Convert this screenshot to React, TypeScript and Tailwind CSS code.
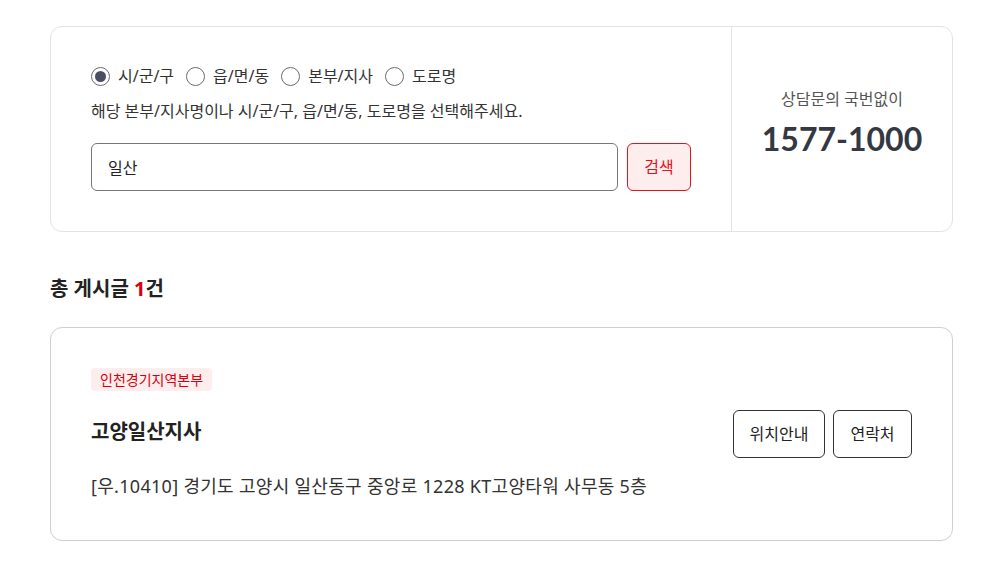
import { useState } from 'react'

const font = { fontFamily: '"Noto Sans", "Noto Sans CJK KR", sans-serif' }

const options = ['시/군/구', '읍/면/동', '본부/지사', '도로명']

export default function App() {
  const [selected, setSelected] = useState(options[0])
  const [keyword, setKeyword] = useState('일산')

  return (
    <div className="min-h-screen bg-white px-[50px] pt-[26px] text-[#222]" style={font}>
      {/* Search box */}
      <div className="flex h-[206px] rounded-[12px] border border-[#e3e3e3]">
        <div className="flex-1 pl-[40px] pr-[40px] pt-[38px]">
          <div className="flex h-[22px] items-center">
            {options.map((opt) => (
              <label
                key={opt}
                className="mr-[12px] flex cursor-pointer items-center"
                onClick={() => setSelected(opt)}
              >
                <span className="flex h-[19px] w-[19px] items-center justify-center rounded-full border border-[#6b6b6b] bg-white">
                  {selected === opt && (
                    <span className="h-[11px] w-[11px] rounded-full bg-[#4b4e60]" />
                  )}
                </span>
                <span className="ml-[8px] text-[16px] leading-[22px] text-[#333]">{opt}</span>
              </label>
            ))}
          </div>
          <p className="mt-[13px] text-[16px] leading-[22px] text-[#333]">
            해당 본부/지사명이나 시/군/구, 읍/면/동, 도로명을 선택해주세요.
          </p>
          <div className="mt-[21px] flex gap-[9px]">
            <input
              value={keyword}
              onChange={(e) => setKeyword(e.target.value)}
              className="h-[48px] flex-1 rounded-[6px] border border-[#777] px-[16px] text-[16px] text-[#222] outline-none"
              style={font}
            />
            <button className="h-[48px] w-[64px] rounded-[6px] border border-[#e1141e] bg-[#fdeded] text-[16px] text-[#e1141e]">
              검색
            </button>
          </div>
        </div>
        <div className="flex w-[221px] flex-col items-center justify-center border-l border-[#e3e3e3] pb-[14px]">
          <p className="text-[16px] leading-[22px] text-[#555]">상담문의 국번없이</p>
          <p
            className="mt-[11px] text-[32px] font-bold leading-[36px] text-[#333842]"
            style={{ fontFamily: 'Lato, "Noto Sans", sans-serif' }}
          >
            1577-1000
          </p>
        </div>
      </div>

      {/* Result count */}
      <h2 className="mt-[43px] text-[20px] font-bold leading-[28px] text-[#222]">
        총 게시글 <span className="text-[#d7000f]">1</span>건
      </h2>

      {/* Result list */}
      <div className="mt-[24px] flex items-start rounded-[12px] border border-[#cfcfcf] px-[40px] pb-[41px] pt-[40px]">
        <div className="flex-1">
          <div className="flex">
            <span className="rounded-[4px] bg-[#fdeded] px-[9px] text-[14px] leading-[23px] text-[#d7000f]">
              인천경기지역본부
            </span>
          </div>
          <h3 className="mt-[27px] text-[20px] font-bold leading-[28px] text-[#222]">고양일산지사</h3>
          <p className="mt-[27px] text-[18px] leading-[26px] tracking-[0.3px] text-[#333]">
            [우.10410] 경기도 고양시 일산동구 중앙로 1228 KT고양타워 사무동 5층
          </p>
        </div>
        <div className="mt-[42px] flex gap-[8px]">
          <button className="h-[48px] w-[92px] rounded-[6px] border border-[#333] bg-white text-[16px] text-[#222]">
            위치안내
          </button>
          <button className="h-[48px] w-[79px] rounded-[6px] border border-[#333] bg-white text-[16px] text-[#222]">
            연락처
          </button>
        </div>
      </div>
    </div>
  )
}
